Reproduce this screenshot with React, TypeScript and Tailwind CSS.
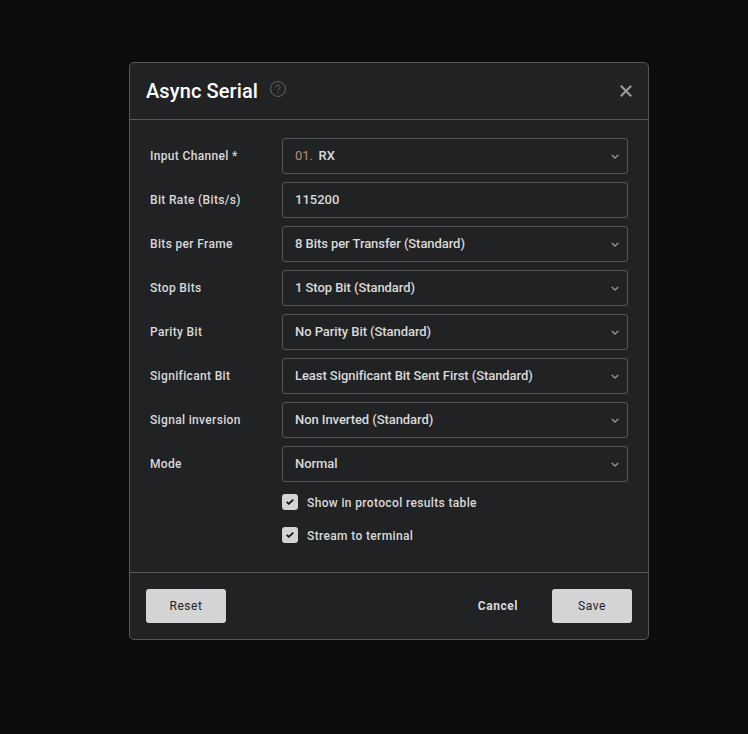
import React from "react";

const fields = [
  { label: "Input Channel *", value: "RX", prefix: "01.", select: true },
  { label: "Bit Rate (Bits/s)", value: "115200", select: false },
  { label: "Bits per Frame", value: "8 Bits per Transfer (Standard)", select: true },
  { label: "Stop Bits", value: "1 Stop Bit (Standard)", select: true },
  { label: "Parity Bit", value: "No Parity Bit (Standard)", select: true },
  { label: "Significant Bit", value: "Least Significant Bit Sent First (Standard)", select: true },
  { label: "Signal inversion", value: "Non Inverted (Standard)", select: true },
  { label: "Mode", value: "Normal", select: true },
];

function Chevron() {
  return (
    <svg width="8" height="6" viewBox="0 0 8 6" fill="none" stroke="#8d8e8f" strokeWidth="1.6" className="mr-2 mt-px">
      <path d="M0.8 1l3.2 3L7.2 1" />
    </svg>
  );
}

function Check({ label }: { label: string }) {
  return (
    <div className="flex h-[33px] items-start">
      <span className="flex size-4 items-center justify-center rounded-[3px] bg-[#d4d4d4]">
        <svg width="8" height="6" viewBox="0 0 8 6" fill="none" stroke="#111213" strokeWidth="1.8">
          <path d="M0.7 2.8l2.1 2L7.3 0.7" />
        </svg>
      </span>
      <span className="ml-[9px] mt-px text-[12px] leading-4 tracking-[0.36px]">{label}</span>
    </div>
  );
}

export default function App() {
  return (
    <div className="flex h-[734px] w-[748px] justify-center bg-[#0d0d0d] pl-[30px] pt-[62px] font-['Roboto',sans-serif] font-medium text-[#d9d9d9]">
      <div className="flex h-[578px] w-[520px] flex-col rounded-[5px] border border-[#56575b] bg-[#212224]">
        <header className="flex h-[57px] shrink-0 items-center border-b border-[#56575b] px-4">
          <h1 className="text-[20px] tracking-[0.1px] text-white">Async Serial</h1>
          <svg width="16" height="16" viewBox="0 0 16 16" fill="none" stroke="#626366" className="mb-1 ml-3">
            <circle cx="8" cy="8" r="7.5" />
            <path d="M5.9 6.4V6a2.1 2.1 0 1 1 3.4 1.7C8.5 8.3 8 8.7 8 9.8M8 11v1.2" />
          </svg>
          <svg width="12" height="12" viewBox="0 0 12 12" stroke="#9c9c9d" strokeWidth="2.1" className="ml-auto">
            <path d="M.8.8l10.4 10.4M11.2.8L.8 11.2" />
          </svg>
        </header>
        <main className="flex-1 pl-5 pr-5 pt-[18px]">
          <div className="flex flex-col gap-2">
            {fields.map((f) => (
              <div key={f.label} className="flex h-9 items-center">
                <span className="w-[132px] text-[12px] tracking-[0.34px]">{f.label}</span>
                <div className="flex h-9 w-[346px] items-center rounded-[3px] border border-[#56575b] pl-3 text-[13px]">
                  {f.prefix && <span className="mr-[5.5px] font-normal text-[#bd8b6d]">{f.prefix}</span>}
                  <span className={f.select ? "flex-1 tracking-[-0.065px]" : "flex-1"}>{f.value}</span>
                  {f.select && <Chevron />}
                </div>
              </div>
            ))}
          </div>
          <div className="ml-[132px] mt-3">
            <Check label="Show in protocol results table" />
            <Check label="Stream to terminal" />
          </div>
        </main>
        <footer className="flex h-[67px] shrink-0 items-center border-t border-[#56575b] px-4 text-[12px] tracking-[0.55px]">
          <button className="h-[34px] w-20 rounded-[3px] bg-[#d4d4d4] font-normal text-[#212224]">Reset</button>
          <button className="ml-auto mr-[34px] font-bold">Cancel</button>
          <button className="h-[34px] w-20 rounded-[3px] bg-[#d4d4d4] font-normal text-[#212224]">Save</button>
        </footer>
      </div>
    </div>
  );
}
